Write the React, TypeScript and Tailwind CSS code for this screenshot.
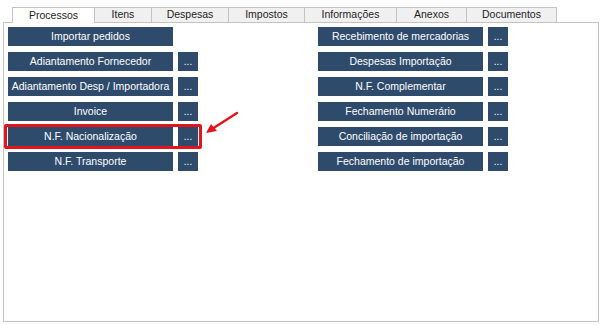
import React from 'react';

const tabs = [
    { label: 'Processos', w: 'w-[83px]' },
    { label: 'Itens', w: 'w-[57px]' },
    { label: 'Despesas', w: 'w-[77px]' },
    { label: 'Impostos', w: 'w-[76px]' },
    { label: 'Informações', w: 'w-[92px]' },
    { label: 'Anexos', w: 'w-[70px]' },
    { label: 'Documentos', w: 'w-[90px]' },
];

const leftItems = [
    { label: 'Importar pedidos', more: false },
    { label: 'Adiantamento Fornecedor', more: true },
    { label: 'Adiantamento Desp / Importadora', more: true },
    { label: 'Invoice', more: true },
    { label: 'N.F. Nacionalização', more: true, highlight: true },
    { label: 'N.F. Transporte', more: true },
];

const rightItems = [
    { label: 'Recebimento de mercadorias', more: true },
    { label: 'Despesas Importação', more: true },
    { label: 'N.F. Complementar', more: true },
    { label: 'Fechamento Numerário', more: true },
    { label: 'Conciliação de importação', more: true },
    { label: 'Fechamento de importação', more: true },
];

interface Item {
    label: string;
    more: boolean;
    highlight?: boolean;
}

const ActionRow: React.FC<{ item: Item }> = ({ item }) => (
    <div className="relative flex h-[19px] gap-[5px]">
        <button className="flex h-[19px] w-[165px] items-center justify-center bg-[#2e4b6c] text-[10.5px] text-white">
            {item.label}
        </button>
        {item.more && (
            <button className="flex h-[19px] w-[20px] items-center justify-center bg-[#2e4b6c] text-[10px] leading-none text-white">
                ...
            </button>
        )}
        {item.highlight && (
            <>
                <div className="absolute left-[-4px] top-[-3px] h-[25px] w-[198px] rounded-[2px] border-[3px] border-[#e3141b]" />
                <svg className="absolute left-[196px] top-[-16px]" width="36" height="26" viewBox="0 0 36 26">
                    <line x1="33" y1="2" x2="8" y2="18" stroke="#e3141b" strokeWidth="2.5" strokeLinecap="round" />
                    <polygon points="2,22 7,13 13,20" fill="#e3141b" />
                </svg>
            </>
        )}
    </div>
);

export default function App() {
    return (
        <div className="h-[325px] w-[603px] bg-white font-['Liberation_Sans',Arial,sans-serif] text-[#1e1e1e]">
            <div className="flex pl-[12px] pt-[7px]">
                {tabs.map((t, i) => (
                    <div
                        key={t.label}
                        className={`${t.w} relative z-10 -mb-px flex h-[16px] items-center justify-center border-t border-r border-[#c3c3c3] text-[10.5px] ${
                            i === 0 ? 'border-l bg-white' : 'border-b bg-[#f0f0f0]'
                        }`}
                    >
                        {t.label}
                    </div>
                ))}
            </div>
            <div className="ml-[3px] flex h-[300px] w-[596px] gap-[120px] border border-[#c3c3c3] pl-[4px] pt-[4px]">
                <div className="flex flex-col gap-[6px]">
                    {leftItems.map((it) => (
                        <ActionRow key={it.label} item={it} />
                    ))}
                </div>
                <div className="flex flex-col gap-[6px]">
                    {rightItems.map((it) => (
                        <ActionRow key={it.label} item={it} />
                    ))}
                </div>
            </div>
        </div>
    );
}
